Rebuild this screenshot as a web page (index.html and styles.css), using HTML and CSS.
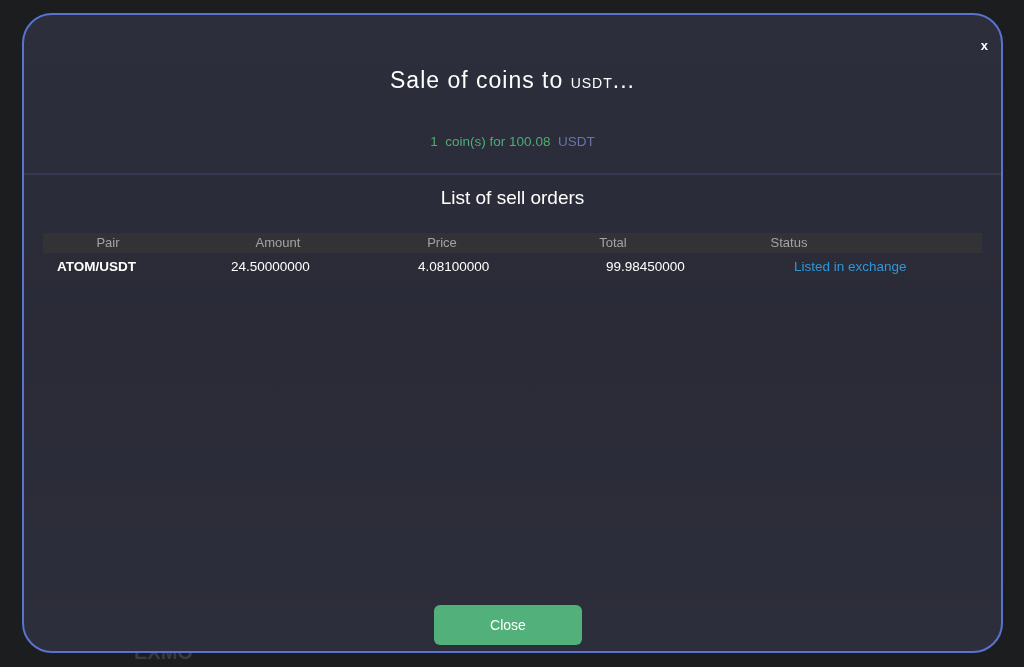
FILE: index.html
```html
<!DOCTYPE html>
<html lang="en">
<head>
<meta charset="utf-8">
<title>Sale of coins</title>
<link rel="stylesheet" href="styles.css">
</head>
<body>
<div class="page">
  <div class="bg-footer">EXMO</div>
</div>
<div class="modal">
  <button class="modal-x" aria-label="close">x</button>
  <div class="modal-head">
    <h1 class="title">Sale of coins to <span class="title-cur">USDT</span>...</h1>
    <p class="summary"><span class="sum-green">1&nbsp; coin(s) for 100.08</span>&nbsp; <span class="sum-cur">USDT</span></p>
  </div>
  <div class="modal-body">
    <h2 class="list-title">List of sell orders</h2>
    <div class="table">
      <div class="thead">
        <div class="th">Pair</div>
        <div class="th">Amount</div>
        <div class="th">Price</div>
        <div class="th">Total</div>
        <div class="th">Status</div>
        <div class="th"></div>
      </div>
      <div class="trow">
        <div class="td td-pair">ATOM/USDT</div>
        <div class="td">24.50000000</div>
        <div class="td">4.08100000</div>
        <div class="td">99.98450000</div>
        <div class="td td-status">Listed in exchange</div>
      </div>
    </div>
  </div>
  <div class="modal-foot">
    <button class="btn-close">Close</button>
  </div>
</div>
</body>
</html>
```
FILE: styles.css
```css
* { box-sizing: border-box; }
html, body { margin: 0; padding: 0; }
body {
  background: #1c1d1f;
  font-family: "Liberation Sans", Arial, Helvetica, sans-serif;
  width: 1024px;
  height: 667px;
  overflow: hidden;
}
.page {
  height: 667px;
  display: flex;
  flex-direction: column;
  justify-content: flex-end;
  padding-left: 134px;
}
.bg-footer {
  color: #3b3c40;
  font-weight: bold;
  font-size: 20px;
  line-height: 24px;
  margin-bottom: 3px;
}
.modal {
  position: fixed;
  z-index: 10;
  left: 22px;
  top: 13px;
  width: 981px;
  height: 640px;
  border: 2px solid #5a73d1;
  border-radius: 30px;
  background: linear-gradient(180deg, #2d2e3c 0%, #2a2b37 50%, #2d2e3b 100%);
  display: flex;
  flex-direction: column;
  color: #fff;
}
.modal-x {
  position: absolute;
  top: 24px;
  right: 13px;
  background: none;
  border: 0;
  color: #fff;
  font-family: "Liberation Sans", Arial, sans-serif;
  font-weight: bold;
  font-size: 13px;
  line-height: 14px;
  padding: 0;
  cursor: pointer;
}
.modal-head {
  padding-top: 50px;
  height: 160px;
  border-bottom: 2px solid #383950;
  text-align: center;
}
.title {
  margin: 0;
  font-size: 23px;
  line-height: 30px;
  font-weight: normal;
  letter-spacing: 1px;
}
.title-cur {
  font-size: 14px;
}
.summary {
  margin: 36px 0 0;
  font-size: 13.5px;
  line-height: 16px;
}
.sum-green { color: #4cae72; }
.sum-cur { color: #6a74a8; }
.modal-body {
  padding: 12px 19px 0;
}
.list-title {
  margin: 0;
  text-align: center;
  font-size: 19px;
  line-height: 22px;
  font-weight: normal;
}
.table {
  margin-top: 24px;
}
.thead {
  display: grid;
  grid-template-columns: 130px 210px 118px 224px 128px 1fr;
  background: #333335;
  height: 20px;
  align-items: center;
}
.th {
  text-align: center;
  color: #a3a3a5;
  font-size: 13px;
  line-height: 16px;
}
.trow {
  display: grid;
  grid-template-columns: 174px 187px 188px 188px 1fr;
  height: 28px;
  align-items: center;
}
.td {
  padding-left: 14px;
  font-size: 13.5px;
  line-height: 16px;
  color: #fff;
}
.td-pair { font-weight: bold; }
.td-status { color: #2f97d6; }
.modal-foot {
  margin-top: auto;
  display: flex;
  justify-content: center;
  padding-bottom: 6px;
  padding-right: 9px;
}
.btn-close {
  width: 148px;
  height: 40px;
  background: #52b07a;
  border: 0;
  border-radius: 6px;
  color: #fff;
  font-family: "Liberation Sans", Arial, sans-serif;
  font-size: 14px;
  cursor: pointer;
}
```
